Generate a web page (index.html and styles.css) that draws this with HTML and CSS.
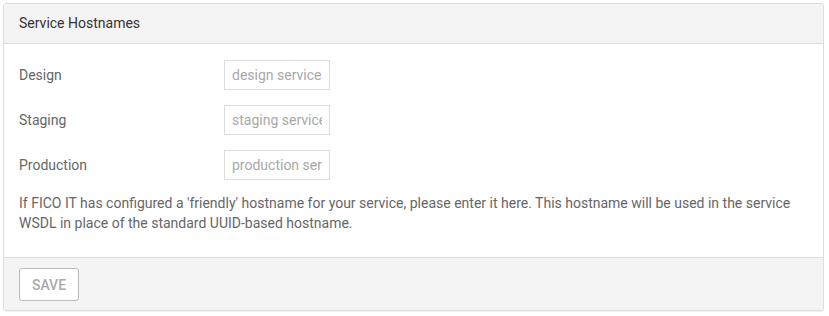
FILE: index.html
```html
<!DOCTYPE html>
<html>
<head>
<meta charset="utf-8">
<link rel="stylesheet" href="styles.css">
</head>
<body>
<div class="card">
  <div class="card-header">Service Hostnames</div>
  <div class="card-body">
    <div class="field">
      <label class="label">Design</label>
      <input class="input" type="text" placeholder="design service hostname">
    </div>
    <div class="field">
      <label class="label">Staging</label>
      <input class="input" type="text" placeholder="staging service hostname">
    </div>
    <div class="field">
      <label class="label">Production</label>
      <input class="input" type="text" placeholder="production service hostname">
    </div>
    <p class="help">If FICO IT has configured a 'friendly' hostname for your service, please enter it here. This hostname will be used in the service WSDL in place of the standard UUID-based hostname.</p>
  </div>
  <div class="card-footer">
    <button class="btn" type="button" disabled>SAVE</button>
  </div>
</div>
</body>
</html>
```

FILE: styles.css
```css
html, body {
  margin: 0;
  padding: 0;
  background: #fff;
}
body {
  padding: 3px 5px 5px 3px;
  font-family: Roboto, "Liberation Sans", sans-serif;
  font-size: 14px;
  color: #666;
}
.card {
  border: 1px solid #ddd;
  border-radius: 3px;
  box-shadow: 0 1px 1px rgba(0,0,0,0.06);
  overflow: hidden;
  background: #fff;
}
.card-header {
  height: 39px;
  line-height: 39px;
  padding: 0 15px;
  background: #f4f4f4;
  border-bottom: 1px solid #ddd;
  color: #333;
  font-size: 14px;
}
.card-body {
  padding: 16px 15px 24px;
}
.field {
  display: grid;
  grid-template-columns: 205px 106px;
  align-items: center;
  margin-bottom: 15px;
}
.label {
  color: #666;
}
.input {
  box-sizing: border-box;
  width: 106px;
  height: 30px;
  border: 1px solid #ddd;
  border-radius: 0;
  padding: 0 7px;
  font-family: Roboto, "Liberation Sans", sans-serif;
  font-size: 14px;
  color: #555;
  outline: none;
}
.input::placeholder {
  color: #a8a8a8;
}
.help {
  margin: -2px 0 0;
  line-height: 20px;
  color: #666;
}
.card-footer {
  background: #f4f4f4;
  border-top: 1px solid #ddd;
  padding: 10px 15px 9px;
}
.btn {
  display: block;
  height: 33px;
  width: 60px;
  padding: 0;
  background: #fff;
  border: 1px solid #bbb;
  border-radius: 3px;
  font-family: Roboto, "Liberation Sans", sans-serif;
  font-size: 14px;
  font-weight: 500;
  color: #aaa;
}
```
